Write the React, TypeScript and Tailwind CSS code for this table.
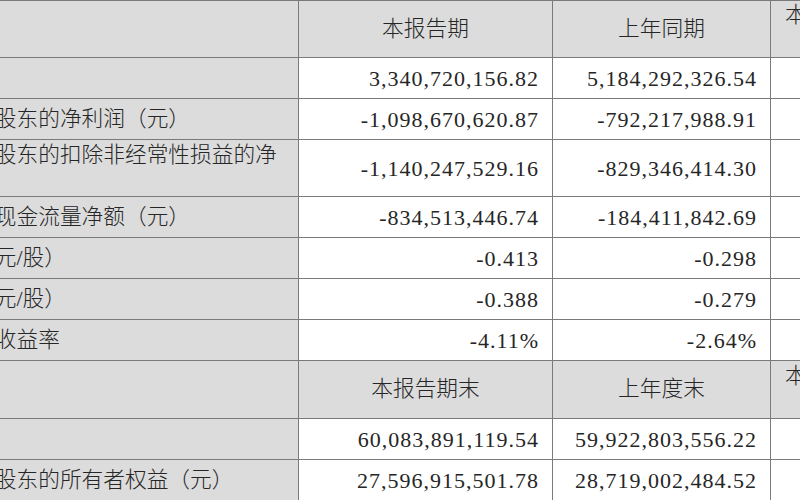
import React from "react";

type Row = {
  head?: boolean;
  label: string;
  a: string;
  b: string;
  c?: string;
  h: string;
};

const rows: Row[] = [
  { head: true, label: "", a: "本报告期", b: "上年同期", c: "本报告期比上年同期增减", h: "h-[57px]" },
  { label: "营业收入（元）", a: "3,340,720,156.82", b: "5,184,292,326.54", h: "h-[41px]" },
  { label: "归属于上市公司股东的净利润（元）", a: "-1,098,670,620.87", b: "-792,217,988.91", h: "h-[41px]" },
  {
    label: "归属于上市公司股东的扣除非经常性损益的净利润（元）",
    a: "-1,140,247,529.16",
    b: "-829,346,414.30",
    h: "h-[57px]",
  },
  { label: "经营活动产生的现金流量净额（元）", a: "-834,513,446.74", b: "-184,411,842.69", h: "h-[41px]" },
  { label: "基本每股收益（元/股）", a: "-0.413", b: "-0.298", h: "h-[41px]" },
  { label: "稀释每股收益（元/股）", a: "-0.388", b: "-0.279", h: "h-[41px]" },
  { label: "加权平均净资产收益率", a: "-4.11%", b: "-2.64%", h: "h-[41px]" },
  { head: true, label: "", a: "本报告期末", b: "上年度末", c: "本报告期末比上年度末增减", h: "h-[58px]" },
  { label: "总资产（元）", a: "60,083,891,119.54", b: "59,922,803,556.22", h: "h-[41px]" },
  { label: "归属于上市公司股东的所有者权益（元）", a: "27,596,915,501.78", b: "28,719,002,484.52", h: "h-[41px]" },
];

const cell = "border border-[#7a7a7a] align-middle";
const num =
  "text-right pr-[13px] tracking-[1px] text-[22px] font-['Liberation_Serif','Noto_Sans_CJK_SC',serif]";

export default function App() {
  return (
    <div className="w-[800px] h-[500px] overflow-hidden bg-white text-[#262626] font-['Liberation_Serif','Noto_Sans_CJK_SC',serif]">
      <table className="ml-[-166px] w-[1160px] table-fixed border-collapse text-[21.7px] font-light">
        <colgroup>
          <col className="w-[464px]" />
          <col className="w-[254px]" />
          <col className="w-[218px]" />
          <col className="w-[224px]" />
        </colgroup>
        <tbody>
          {rows.map((r, i) =>
            r.head ? (
              <tr key={i} className={r.h}>
                <td className={`${cell} bg-[#dcdcdc]`}></td>
                <td className={`${cell} bg-[#dcdcdc] text-center`}>{r.a}</td>
                <td className={`${cell} bg-[#dcdcdc] text-center`}>{r.b}</td>
                <td className={`${cell} bg-[#dcdcdc] px-3 text-center leading-[27px]`}>{r.c}</td>
              </tr>
            ) : (
              <tr key={i} className={r.h}>
                <td className={`${cell} bg-[#dcdcdc] pl-2 pr-3 leading-[25px]`}>{r.label}</td>
                <td className={`${cell} ${num}`}>{r.a}</td>
                <td className={`${cell} ${num}`}>{r.b}</td>
                <td className={cell}></td>
              </tr>
            )
          )}
        </tbody>
      </table>
    </div>
  );
}
